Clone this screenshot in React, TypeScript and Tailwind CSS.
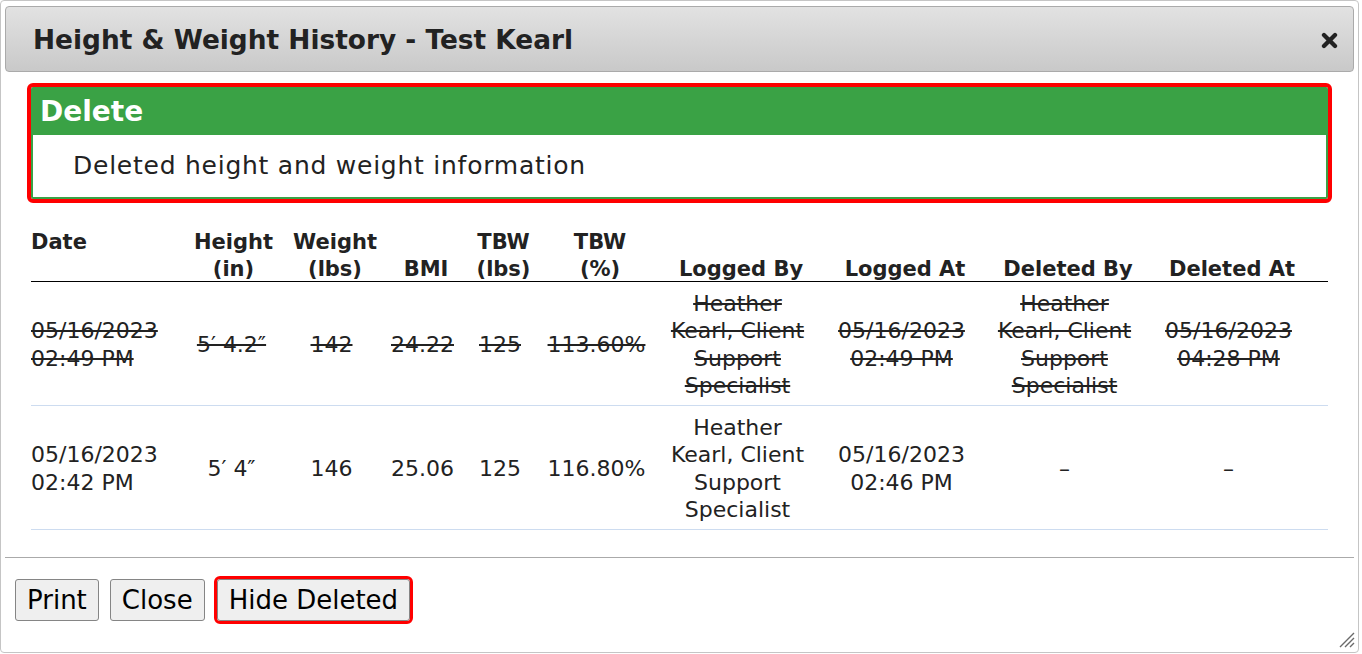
interface Entry {
  date: string;
  time: string;
  height: string;
  weight: string;
  bmi: string;
  tbw: string;
  tbwPct: string;
  loggedBy: string[];
  loggedAt: string[];
  deletedBy: string[] | null;
  deletedAt: string[] | null;
  deleted: boolean;
}

const entries: Entry[] = [
  {
    date: '05/16/2023',
    time: '02:49 PM',
    height: '5\u2032 4.2\u2033',
    weight: '142',
    bmi: '24.22',
    tbw: '125',
    tbwPct: '113.60%',
    loggedBy: ['Heather', 'Kearl, Client', 'Support', 'Specialist'],
    loggedAt: ['05/16/2023', '02:49 PM'],
    deletedBy: ['Heather', 'Kearl, Client', 'Support', 'Specialist'],
    deletedAt: ['05/16/2023', '04:28 PM'],
    deleted: true,
  },
  {
    date: '05/16/2023',
    time: '02:42 PM',
    height: '5\u2032 4\u2033',
    weight: '146',
    bmi: '25.06',
    tbw: '125',
    tbwPct: '116.80%',
    loggedBy: ['Heather', 'Kearl, Client', 'Support', 'Specialist'],
    loggedAt: ['05/16/2023', '02:46 PM'],
    deletedBy: null,
    deletedAt: null,
    deleted: false,
  },
];

function Lines({ lines }: { lines: string[] | null }) {
  if (!lines) return <>–</>;
  return (
    <>
      {lines.map((l) => (
        <div key={l}>{l}</div>
      ))}
    </>
  );
}

function Th({ children, top }: { children: React.ReactNode; top?: boolean }) {
  return (
    <th className={`p-0 ${top ? 'text-left align-top' : 'align-bottom'}`}>
      <span className="relative top-[2px] block">{children}</span>
    </th>
  );
}

export default function App() {
  return (
    <div className="w-[1362px] h-[654px] bg-white font-['DejaVu_Sans',sans-serif] text-[#222]">
      <div className="relative w-[1359px] h-[653px] border border-[#c5c5c5] rounded-[4px] pt-[5px] px-[4px] flex flex-col">
        {/* Title bar */}
        <div className="h-[66px] shrink-0 flex items-center justify-between border border-[#aaaaaa] rounded-[4px] bg-gradient-to-b from-[#e2e2e2] to-[#c9c9c9] pl-[27px] pr-[15px]">
          <h1 className="text-[26.4px] font-bold leading-none mt-[3px]">Height &amp; Weight History - Test Kearl</h1>
          <svg width="17" height="17" viewBox="0 0 16 16" className="mt-[3px]">
            <path d="M2.8 2.8 L13.2 13.2 M13.2 2.8 L2.8 13.2" stroke="#222" strokeWidth="4" strokeLinecap="round" />
          </svg>
        </div>

        {/* Content */}
        <div className="px-[26px] pt-[15px] flex-1">
          <div className="border-2 border-[#3aa245] outline-[4px] outline-[#ff0000] rounded-[2px]">
            <div className="h-[46px] bg-[#3aa245] text-white text-[28px] font-bold flex items-center pl-[7px]">
              Delete
            </div>
            <div className="h-[62px] flex items-center pl-[40px] text-[25px] tracking-[0.75px]">
              Deleted height and weight information
            </div>
          </div>

          <table className="table-fixed w-[1297px] mt-[28px] border-collapse">
            <colgroup>
              <col className="w-[152px]" />
              <col className="w-[101px]" />
              <col className="w-[102px]" />
              <col className="w-[80px]" />
              <col className="w-[75px]" />
              <col className="w-[118px]" />
              <col className="w-[164px]" />
              <col className="w-[164px]" />
              <col className="w-[162px]" />
              <col className="w-[179px]" />
            </colgroup>
            <thead>
              <tr className="border-b border-black text-[21px] font-bold leading-[27px]">
                <Th top>Date</Th>
                <Th>Height<br />(in)</Th>
                <Th>Weight<br />(lbs)</Th>
                <Th>BMI</Th>
                <Th>TBW<br />(lbs)</Th>
                <Th>TBW<br />(%)</Th>
                <Th>Logged By</Th>
                <Th>Logged At</Th>
                <Th>Deleted By</Th>
                <th className="align-bottom p-0 pr-[13px]">
                  <span className="relative top-[2px] block">Deleted At</span>
                </th>
              </tr>
            </thead>
            <tbody className="text-[22px] leading-[27.3px]">
              {entries.map((e, i) => (
                <tr
                  key={i}
                  className={`h-[124px] border-b border-[#cddcf0] ${e.deleted ? 'line-through' : ''}`}
                >
                  <td className="p-0 pt-[2px] align-middle">
                    <div>{e.date}</div>
                    <div>{e.time}</div>
                  </td>
                  <td className="p-0 pt-[2px] pr-[4px] text-center">{e.height}</td>
                  <td className="p-0 pt-[2px] pr-[7px] text-center">{e.weight}</td>
                  <td className="p-0 pt-[2px] pr-[7px] text-center">{e.bmi}</td>
                  <td className="p-0 pt-[2px] pr-[7px] text-center">{e.tbw}</td>
                  <td className="p-0 pt-[2px] pr-[7px] text-center">{e.tbwPct}</td>
                  <td className="p-0 pt-[2px] pr-[7px] text-center"><Lines lines={e.loggedBy} /></td>
                  <td className="p-0 pt-[2px] pr-[7px] text-center"><Lines lines={e.loggedAt} /></td>
                  <td className="p-0 pt-[2px] pr-[7px] text-center"><Lines lines={e.deletedBy} /></td>
                  <td className="p-0 pt-[2px] pr-[20px] text-center"><Lines lines={e.deletedAt} /></td>
                </tr>
              ))}
            </tbody>
          </table>
        </div>

        {/* Footer */}
        <div className="h-[95px] shrink-0 border-t border-[#aaaaaa] pt-[21px] pl-[10px] flex items-start gap-[11px]">
          <button className="h-[42px] px-[11px] bg-[#efefef] border border-[#858585] rounded-[3px] text-[26px] leading-none text-black">
            Print
          </button>
          <button className="h-[42px] px-[11px] bg-[#efefef] border border-[#858585] rounded-[3px] text-[26px] leading-none text-black">
            Close
          </button>
          <button className="ml-[1px] h-[42px] px-[11px] bg-[#efefef] border border-[#858585] rounded-[3px] text-[26px] leading-none text-black outline-[3px] outline-[#ff0000]">
            Hide Deleted
          </button>
        </div>

        <svg width="18" height="18" viewBox="0 0 18 18" className="absolute right-[3px] bottom-[4px]">
          <path d="M17 3 L3 17 M17 8 L8 17 M17 13 L13 17" stroke="#6a6a6a" strokeWidth="1.4" />
        </svg>
      </div>
    </div>
  );
}
